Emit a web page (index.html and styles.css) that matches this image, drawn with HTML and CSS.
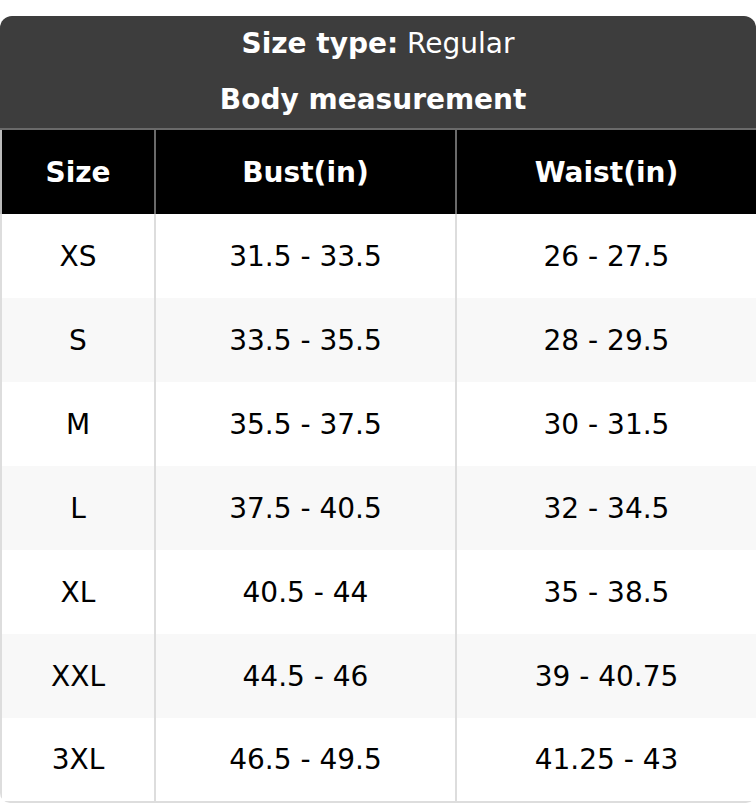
FILE: index.html
```html
<!DOCTYPE html>
<html>
<head>
<meta charset="utf-8">
<link rel="stylesheet" href="styles.css">
</head>
<body>
<div class="chart">
  <div class="chart-title">
    <div class="title-line"><strong>Size type:</strong> Regular</div>
    <div class="title-line"><strong>Body measurement&nbsp;</strong></div>
  </div>
  <table class="size-table">
    <colgroup>
      <col class="c-size">
      <col class="c-bust">
      <col class="c-waist">
    </colgroup>
    <thead>
      <tr><th>Size</th><th>Bust(in)</th><th>Waist(in)</th></tr>
    </thead>
    <tbody>
      <tr><td>XS</td><td>31.5 - 33.5</td><td>26 - 27.5</td></tr>
      <tr><td>S</td><td>33.5 - 35.5</td><td>28 - 29.5</td></tr>
      <tr><td>M</td><td>35.5 - 37.5</td><td>30 - 31.5</td></tr>
      <tr><td>L</td><td>37.5 - 40.5</td><td>32 - 34.5</td></tr>
      <tr><td>XL</td><td>40.5 - 44</td><td>35 - 38.5</td></tr>
      <tr><td>XXL</td><td>44.5 - 46</td><td>39 - 40.75</td></tr>
      <tr><td>3XL</td><td>46.5 - 49.5</td><td>41.25 - 43</td></tr>
    </tbody>
  </table>
</div>
</body>
</html>
```

FILE: styles.css
```css
html, body {
  margin: 0;
  padding: 0;
  background: #ffffff;
}
body {
  font-family: "DejaVu Sans", sans-serif;
  font-size: 28px;
  color: #000;
}
.chart {
  margin-top: 16px;
  width: 756px;
  border-radius: 12px 12px 10px 10px;
  overflow: hidden;
  box-sizing: border-box;
}
.chart-title {
  background: #3d3d3d;
  color: #fff;
  text-align: center;
  height: 112px;
  border-bottom: 2px solid #6a6a6a;
  box-sizing: content-box;
}
.title-line {
  height: 56px;
  line-height: 56px;
}
.title-line strong {
  font-weight: bold;
}
.size-table {
  width: 756px;
  border-collapse: collapse;
  table-layout: fixed;
}
.c-size { width: 154px; }
.c-bust { width: 301px; }
.c-waist { width: 301px; }
.size-table th,
.size-table td {
  text-align: center;
  height: 84px;
  padding: 0;
  box-sizing: border-box;
  border-left: 2px solid #dddddd;
  border-right: 2px solid #dddddd;
}
.size-table th {
  background: #000;
  color: #fff;
  font-weight: bold;
  border-left-color: #6a6a6a;
  border-right-color: #6a6a6a;
}
.size-table th:first-child { border-left-color: #bbbbbb; }
.size-table th:last-child { border-right-color: #bbbbbb; }
.size-table td {
  font-weight: normal;
}
.size-table tbody tr:nth-child(even) td {
  background: #f8f8f8;
}
.size-table tbody tr:last-child td {
  border-bottom: 2px solid #dddddd;
}
```
